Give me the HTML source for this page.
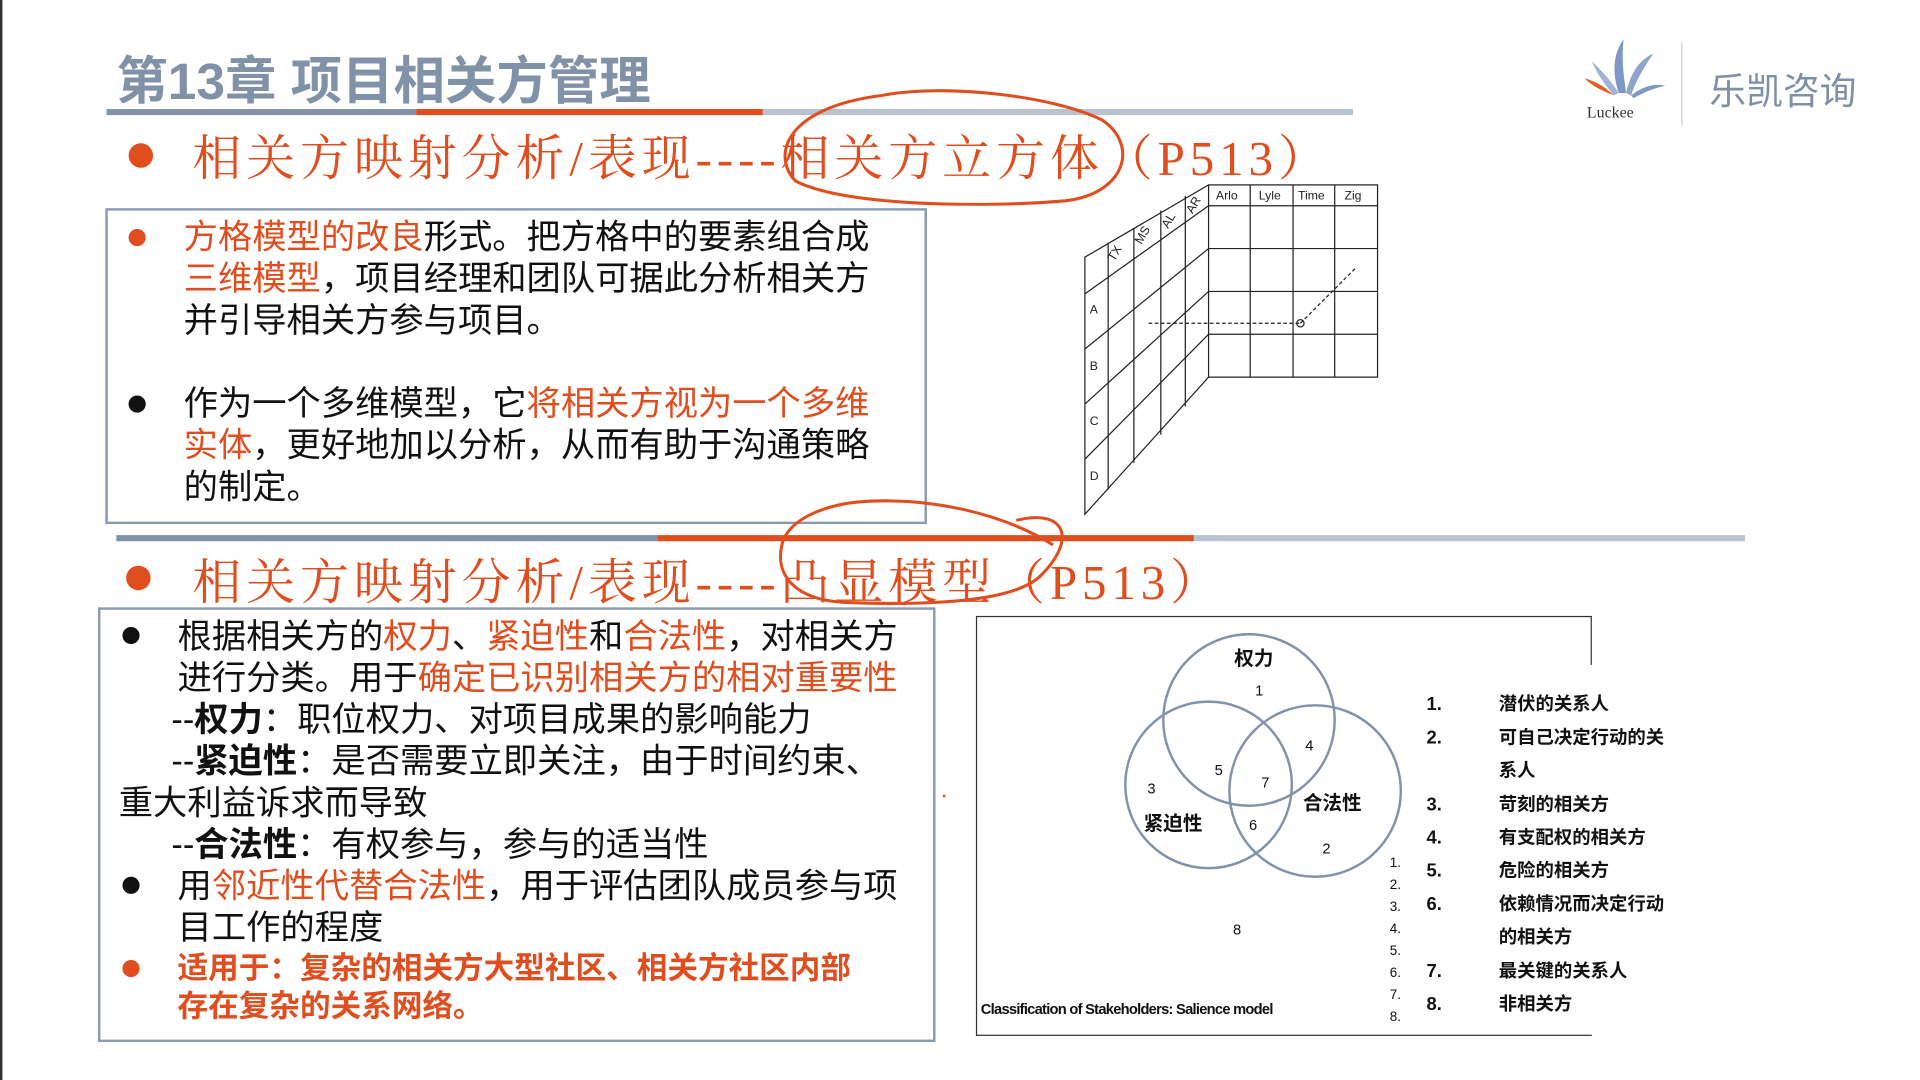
<!DOCTYPE html>
<html><head><meta charset="utf-8"><style>
html,body{margin:0;padding:0;width:1920px;height:1080px;overflow:hidden;background:#fff}
#w{position:absolute;left:0;top:0;width:1568px;height:882px;transform:scale(1.22449);transform-origin:0 0;font-family:"Liberation Sans","Noto Sans CJK SC",sans-serif;color:#111}
.a{position:absolute;white-space:nowrap}
.o{color:#e04e1f}
.t{font-size:28px;line-height:34px}
.dot{position:absolute;width:14px;height:14px;border-radius:50%}
.h{font-family:"Liberation Serif","Noto Serif CJK SC",serif;font-size:40px;color:#e04e1f;letter-spacing:4px}
</style></head><body><div id="w">
<div style="position:absolute;left:0;top:0;width:2px;height:882px;background:#333"></div>
<div class="a" style="left:95px;top:33px;font-size:42px;font-weight:bold;color:#8191a8;letter-spacing:0px">第13章 项目相关方管理</div>
<svg class="a" style="left:1288px;top:28px" width="75" height="72" viewBox="0 0 75 72">
<path d="M34 48 C28 30 30 15 38 4 C36 20 38 34 40 48Z" fill="#7d98c4"/>
<path d="M40 48 C44 30 52 20 62 16 C54 28 48 38 44 50Z" fill="#8fa6cc"/>
<path d="M30 50 C22 40 16 32 12 22 C20 30 28 38 34 48Z" fill="#9fb4d6"/>
<path d="M44 50 C54 42 64 40 72 42 C62 44 54 48 46 52Z" fill="#7d98c4"/>
<path d="M6 36 C14 38 22 42 30 50 C20 46 12 42 6 36Z" fill="#e2602a"/>
<text x="8" y="68" font-size="13" font-family="Liberation Serif" fill="#333">Luckee</text>
</svg>
<div style="position:absolute;left:1373px;top:35px;width:1px;height:68px;background:#ccc"></div>
<div class="a" style="left:1396px;top:50px;font-size:30px;color:#7f8fa6">乐凯咨询</div>
<div style="position:absolute;left:87px;top:89px;width:253px;height:5px;background:#8292a8"></div>
<div style="position:absolute;left:340px;top:89px;width:283px;height:5px;background:#e04e1f"></div>
<div style="position:absolute;left:623px;top:89px;width:482px;height:5px;background:#b9c3d0"></div>
<div class="dot" style="left:105px;top:117px;width:20px;height:20px;background:#e04e1f"></div>
<div class="a h" style="left:157px;top:98px">相关方映射分析/表现----相关方立方体（P513）</div>
<svg class="a" style="left:630px;top:68px" width="310" height="100"><path d="M90 10 C140 0 230 10 270 30 C300 50 290 90 240 96 C170 102 60 100 20 80 C0 60 10 20 90 10" fill="none" stroke="#e04e1f" stroke-width="2.5"/></svg>
<div style="position:absolute;left:86px;top:170px;width:667px;height:254px;border:2px solid #8a9ab0"></div>
<div class="dot" style="left:105px;top:187px;background:#e04e1f"></div>
<div class="a t" style="left:150px;top:177px"><span class="o">方格模型的改良</span>形式。把方格中的要素组合成<br><span class="o">三维模型</span>，项目经理和团队可据此分析相关方<br>并引导相关方参与项目。</div>
<div class="dot" style="left:105px;top:323px;background:#111"></div>
<div class="a t" style="left:150px;top:313px">作为一个多维模型，它<span class="o">将相关方视为一个多维</span><br><span class="o">实体</span>，更好地加以分析，从而有助于沟通策略<br>的制定。</div>
<svg class="a" style="left:880px;top:148px" width="250" height="278" viewBox="880 148 250 278" font-family="Liberation Sans" font-size="10" fill="none" stroke="#222" stroke-width="1">
<rect x="987" y="151" width="138" height="157"/>
<line x1="987" y1="168" x2="1125" y2="168"/><line x1="987" y1="203" x2="1125" y2="203"/><line x1="987" y1="238" x2="1125" y2="238"/><line x1="987" y1="273" x2="1125" y2="273"/>
<line x1="1021" y1="151" x2="1021" y2="308"/><line x1="1056" y1="151" x2="1056" y2="308"/><line x1="1090" y1="151" x2="1090" y2="308"/>
<path d="M987 151 L886 210 L886 420 L987 308"/>
<path d="M886 240 L987 168 M886 285 L987 203 M886 330 L987 238 M886 375 L987 273"/>
<path d="M905 198 L905 400 M926 186 L926 378 M948 172 L948 355 M968 160 L968 332"/>
<path d="M938 264 L1062 264" stroke-dasharray="3 2"/><path d="M1062 264 L1108 218" stroke-dasharray="3 2"/>
<circle cx="1062" cy="264" r="3"/>
<g fill="#222" stroke="none"><text x="993" y="163">Arlo</text><text x="1028" y="163">Lyle</text><text x="1060" y="163">Time</text><text x="1098" y="163">Zig</text>
<text x="890" y="256">A</text><text x="890" y="302">B</text><text x="890" y="347">C</text><text x="890" y="392">D</text>
<text transform="translate(910 214) rotate(-60)">TX</text><text transform="translate(932 200) rotate(-60)">MS</text><text transform="translate(954 187) rotate(-60)">AL</text><text transform="translate(974 175) rotate(-60)">AR</text></g>
</svg>
<div style="position:absolute;left:95px;top:437px;width:442px;height:5px;background:#8292a8"></div>
<div style="position:absolute;left:537px;top:437px;width:438px;height:5px;background:#e04e1f"></div>
<div style="position:absolute;left:975px;top:437px;width:450px;height:5px;background:#b9c3d0"></div>
<div class="dot" style="left:103px;top:462px;width:20px;height:20px;background:#e04e1f"></div>
<div class="a h" style="left:157px;top:444px">相关方映射分析/表现----凸显模型（P513）</div>
<svg class="a" style="left:630px;top:400px" width="250" height="100"><path d="M70 10 C130 5 190 20 230 45 M200 25 C240 15 250 40 220 70 C200 90 140 95 60 92 C20 90 0 70 10 40 C20 20 50 12 70 10" fill="none" stroke="#e04e1f" stroke-width="2.5"/></svg>
<div style="position:absolute;left:80px;top:496px;width:680px;height:351px;border:2px solid #8a9ab0"></div>
<div class="dot" style="left:100px;top:512px;background:#111"></div>
<div class="a t" style="left:145px;top:503px">根据相关方的<span class="o">权力</span>、<span class="o">紧迫性</span>和<span class="o">合法性</span>，对相关方<br>进行分类。用于<span class="o">确定已识别相关方的相对重要性</span></div>
<div class="a t" style="left:140px;top:571px">--<b>权力</b>：职位权力、对项目成果的影响能力<br>--<b>紧迫性</b>：是否需要立即关注，由于时间约束、</div>
<div class="a t" style="left:97px;top:639px">重大利益诉求而导致</div>
<div class="a t" style="left:140px;top:673px">--<b>合法性</b>：有权参与，参与的适当性</div>
<div class="dot" style="left:100px;top:716px;background:#111"></div>
<div class="a t" style="left:145px;top:707px">用<span class="o">邻近性代替合法性</span>，用于评估团队成员参与项<br>目工作的程度</div>
<div class="dot" style="left:100px;top:784px;background:#e04e1f"></div>
<div class="a o" style="left:145px;top:776px;font-size:25px;line-height:31px;font-weight:bold">适用于：复杂的相关方大型社区、相关方社区内部<br>存在复杂的关系网络。</div>
<div style="position:absolute;left:770px;top:649px;width:2px;height:2px;background:#e04e1f"></div>
<div style="position:absolute;left:797px;top:503px;width:502px;height:341px;border-top:1px solid #333;border-left:1px solid #333;border-bottom:1px solid #333"></div>
<div style="position:absolute;left:1299px;top:503px;width:1px;height:40px;background:#333"></div>
<svg class="a" style="left:797px;top:503px" width="503" height="340" font-family="Liberation Sans,Noto Sans CJK SC" fill="none" stroke="#8292a8" stroke-width="2">
<circle cx="223" cy="85" r="70"/><circle cx="190" cy="138" r="68"/><circle cx="277" cy="143" r="70"/>
<g fill="#111" stroke="none" font-size="12"><text x="228" y="65">1</text><text x="269" y="110">4</text><text x="195" y="130">5</text><text x="233" y="140">7</text><text x="140" y="145">3</text><text x="223" y="175">6</text><text x="283" y="194">2</text><text x="210" y="260">8</text>
<text x="211" y="40" font-size="16" font-weight="bold">权力</text><text x="267" y="158" font-size="16" font-weight="bold">合法性</text><text x="137" y="175" font-size="16" font-weight="bold">紧迫性</text>
<text x="4" y="325" font-size="12" font-weight="bold" letter-spacing="-0.6">Classification of Stakeholders: Salience model</text>
<g font-size="11"><text x="338" y="205">1.</text><text x="338" y="223">2.</text><text x="338" y="241">3.</text><text x="338" y="259">4.</text><text x="338" y="277">5.</text><text x="338" y="295">6.</text><text x="338" y="313">7.</text><text x="338" y="331">8.</text></g></g>
</svg>
<div class="a" style="left:1165px;top:562px;font-size:15px;line-height:27.2px;font-weight:bold">1.<br>2.<br><br>3.<br>4.<br>5.<br>6.<br><br>7.<br>8.</div>
<div class="a" style="left:1224px;top:562px;font-size:15px;line-height:27.2px;font-weight:bold">潜伏的关系人<br>可自己决定行动的关<br>系人<br>苛刻的相关方<br>有支配权的相关方<br>危险的相关方<br>依赖情况而决定行动<br>的相关方<br>最关键的关系人<br>非相关方</div>
</div></body></html>
